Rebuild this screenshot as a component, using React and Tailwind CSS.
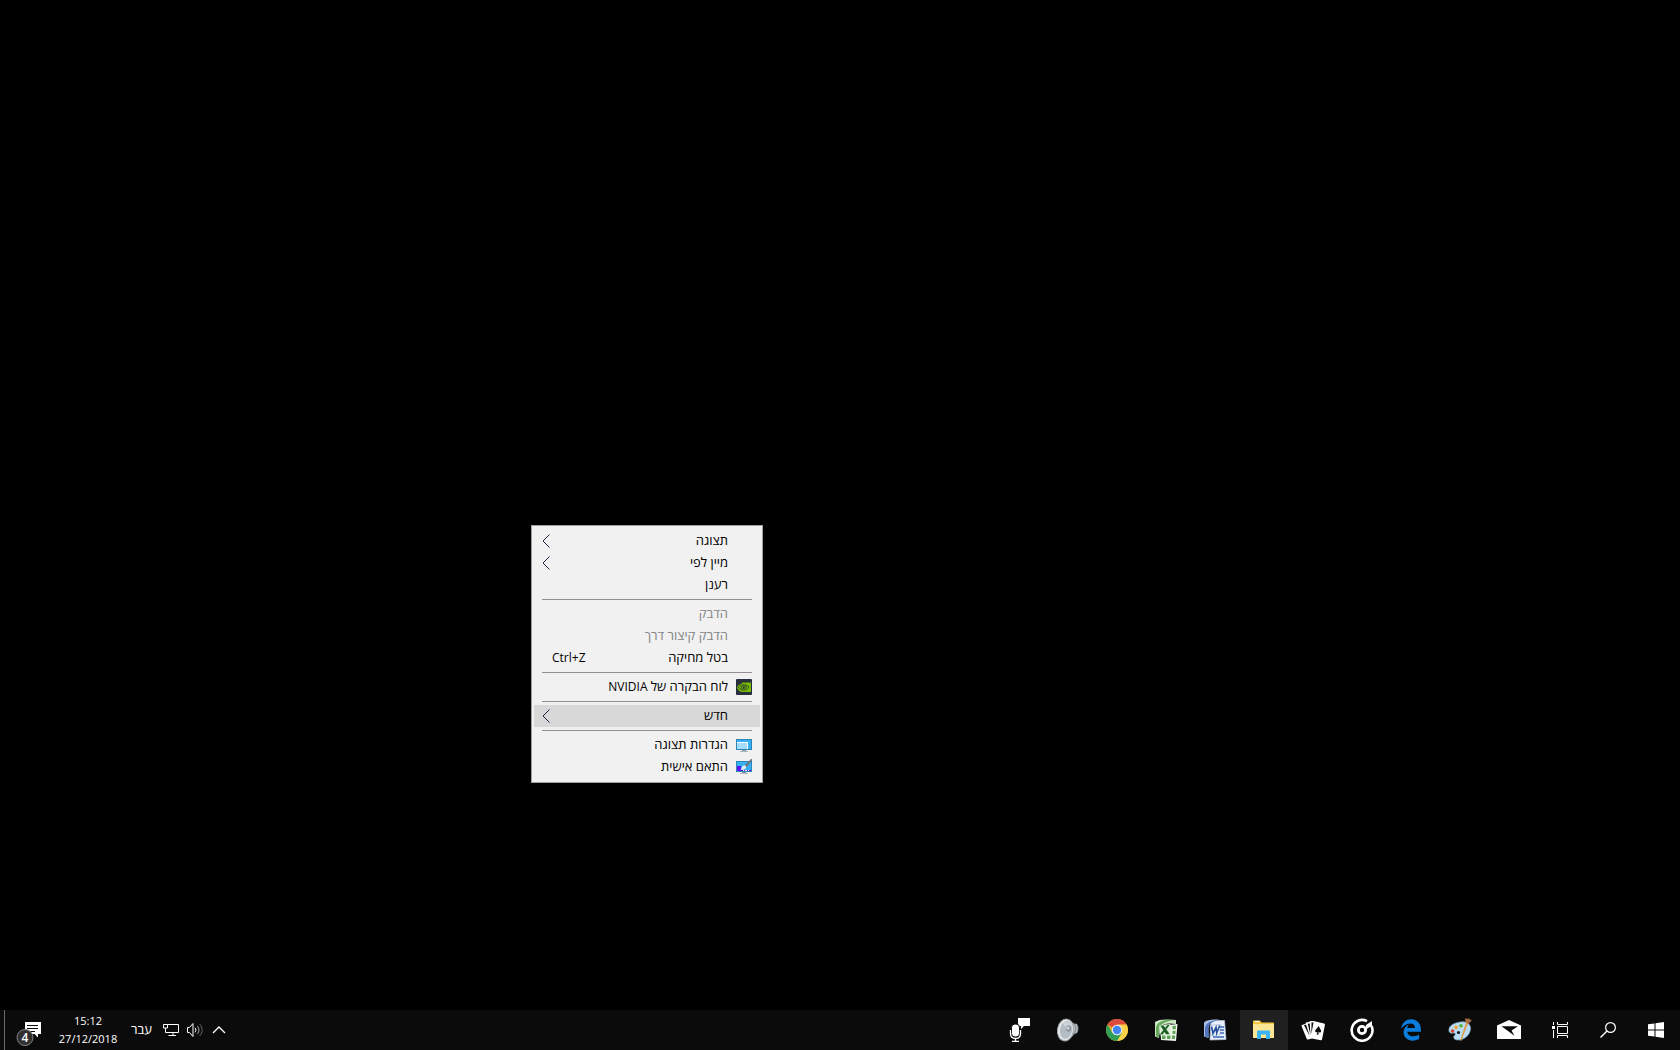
import React from "react";
import { FaEdgeLegacy } from "react-icons/fa6";

function Icon({ children, className = "w-6 h-6", box = "0 0 24 24" }) {
  return (
    <svg viewBox={box} className={`shrink-0 ${className}`} fill="none" aria-hidden="true">
      {children}
    </svg>
  );
}

/* ---------- context menu icons ---------- */

const NvidiaIcon = () => (
  <Icon className="w-4 h-4" box="0 0 16 16">
    <rect width="16" height="16" rx="1" fill="#262f3b" />
    <path d="M6 3.500h9v9.500H6c-2.500-.4-4-2-5-4.600C2.200 6 3.800 4.800 6 4.500Z" fill="#76b900" />
    <path d="M2.500 8.500C4 5.500 9 4.500 13 8c-2.500 4-7.500 3.800-10.500.5Z" stroke="#262f3b" strokeWidth=".8" />
    <path d="M5 8.300C6.500 6.500 9 6.500 10.500 8 9 10 6.500 10 5 8.300Z" stroke="#262f3b" strokeWidth=".8" />
    <rect x="7" y="7.700" width="1.500" height="1.200" fill="#262f3b" />
  </Icon>
);

const DisplayIcon = () => (
  <Icon className="w-4 h-4" box="0 0 16 16">
    <rect x=".5" y="2.500" width="15" height="10" fill="#36b0f5" stroke="#2d86b8" />
    <path d="M1 5.500h10.500V12H1Z" fill="#a6dcfb" />
    <path d="M1 5.500h10.500V12" stroke="#fff" />
    <path d="M6 13h4v1H6Z" fill="#8b98a3" />
    <path d="M4 14h8v1H4Z" fill="#a9b6c0" />
  </Icon>
);

const PersonalizeIcon = () => (
  <Icon className="w-4 h-4" box="0 0 16 16">
    <rect x=".5" y="2.500" width="15" height="10" fill="#36b0f5" stroke="#2d86b8" />
    <path d="M1 7h4v5H1Z" fill="#5a12f5" />
    <path d="M5 11h10v1H5Z" fill="#5a12f5" />
    <path d="M7 11h1v1H7ZM9 11h2v1H9ZM12 11h1v1h-1Z" fill="#fff" />
    <path d="M15 0h1v1.500L10.500 8 8.500 6.500Z" fill="#6c7680" />
    <path d="M8.500 6.200c-2.500.3-2.300 2.800-4 4.300 3 .8 6-.5 5.700-3Z" fill="#e8ecf0" />
    <path d="M6 13h4v1H6Z" fill="#8b98a3" />
    <path d="M4 14h8v1H4Z" fill="#a9b6c0" />
  </Icon>
);

const SubmenuArrow = () => (
  <Icon className="w-2 h-4" box="0 0 8 16">
    <path d="M7.500 1.500 1 8l6.500 6.500" stroke="#23234a" />
  </Icon>
);

/* ---------- taskbar app icons ---------- */

const StartIcon = () => (
  <Icon className="w-4 h-4" box="0 0 16 16">
    <path d="M0 2.300 6.500 1.400V7.500H0ZM7.500 1.200 16 0V7.500H7.500ZM0 8.500H6.500V14.600L0 13.700ZM7.500 8.500H16V16L7.500 14.800Z" fill="#fff" />
  </Icon>
);

const SearchIcon = () => (
  <Icon className="w-4 h-4" box="0 0 16 16">
    <circle cx="10.500" cy="5.500" r="4.900" stroke="#fff" strokeWidth="1.200" />
    <path d="M7 9 .5 15.500" stroke="#fff" strokeWidth="1.400" />
  </Icon>
);

const TaskViewIcon = () => (
  <Icon className="w-4 h-4" box="0 0 16 16">
    <path d="M1.500 0v3M1.500 8v8M5.500 0v2.500h10V0M5.500 16v-2.500h10V16M5.500 4.500h10v7h-10Z" stroke="#fff" />
    <path d="M0 4h3v3H0Z" fill="#fff" />
  </Icon>
);

const MailIcon = () => (
  <Icon>
    <path d="M0 7.500 12 2l12 5.500V21H0Z" fill="#fff" />
    <path d="M4.500 8.300h16.500l-6.500 4.200 3 5.300Z" fill="#0b0b0b" />
  </Icon>
);

const PaintIcon = () => (
  <Icon>
    <path d="M10 4.500c7-2 13 .8 12.500 6.500C22 17 16 22.500 9.500 22 5 21.600 5 18.500 7 17c1-1 0-2.500-2-2-3 .8-4.500-1-4-4 .5-3 4-5.500 9-6.500Z" fill="#b9dcf3" stroke="#79a3c0" strokeWidth=".7" />
    <circle cx="4.500" cy="13" r="1.800" fill="#dd4335" />
    <circle cx="8" cy="9.300" r="1.800" fill="#f0a52c" />
    <circle cx="13" cy="7.700" r="1.800" fill="#54b335" />
    <circle cx="10.500" cy="14.500" r="1.600" fill="#0d1a29" />
    <path d="M20.500 4 13.500 22.500l-1 1 .2-2.500L18.500 3Z" fill="#e09a45" />
    <path d="m17.500 4-.5-4 2.500 1 1.500-1 .5 1.500 2.500.5-3.500 4Z" fill="#a66b42" />
  </Icon>
);

const EdgeIcon = () => <FaEdgeLegacy className="size-[22px] text-[#0a7ddd]" aria-hidden="true" />;

const GrooveIcon = () => (
  <Icon>
    <path d="M17 3.200A10.400 10.400 0 1 0 21.500 8" stroke="#fff" strokeWidth="2.600" />
    <circle cx="12" cy="12" r="3.600" stroke="#fff" strokeWidth="2.800" />
    <path d="M16 12V7l6-4v5l-4 2" fill="#fff" />
  </Icon>
);

const SolitaireIcon = () => (
  <Icon>
    <path d="M1 7 4.500 5.800 5 4.500l3.500-.7L9 3h3.500L23 5.600c.8.200 1 .7.900 1.300L21 21.500c-.2.600-.6.800-1.200.7L11 20.500l-4 1c-.6.100-1-.1-1.200-.6L.5 8c-.1-.5 0-.8.5-1Z" fill="#fff" />
    <path d="M3 7.300 5 6.600 8.700 18ZM6.700 5.800l2-.4.800 11.600ZM10.500 4.500h2L10.400 16Z" fill="#0b0b0b" />
    <path d="m17.700 8-3.400 4.300c-.7 1.500.8 2.600 2.200 1.700l-1 2.600h2.200l-.2-2.500c1.500 1 3.100 0 2.500-1.700Z" fill="#0b0b0b" />
  </Icon>
);

const ExplorerIcon = () => (
  <Icon>
    <path d="M1 3.500c0-.6.4-1 1-1h6l1.500 2H21c.6 0 1 .4 1 1V19c0 .6-.4 1-1 1H2c-.6 0-1-.4-1-1Z" fill="#f6c643" />
    <path d="M1 6h21v13c0 .6-.4 1-1 1H2c-.6 0-1-.4-1-1Z" fill="#ffe697" />
    <path d="M3 3.500h4" stroke="#fff" />
    <path d="M5 21v-7.500c0-.6.400-1 1-1h11c.6 0 1 .4 1 1V21h-4v-4.500H9V21Z" fill="#3bb4f2" />
  </Icon>
);

const WordIcon = () => (
  <Icon>
    <path d="M8 2.500h13.500l1.500 19-16 .5Z" fill="#e9f0fa" stroke="#b6c6e2" strokeWidth=".7" />
    <path d="M17 9h4M17 12h4M17 15h4M10 19h11" stroke="#3b66b5" strokeWidth="1.300" />
    <path d="M1 4.500C4 1.500 11 1 17 2c-5 0-10 2-11 5-1 3.500-1 9-.5 13L1 18.500Z" fill="#a9bee2" />
    <path d="M17 2C10 2 4 4 2 9v9.500l4 1L5.500 10c0-4 5-7.500 11.500-8Z" fill="#5176bb" />
    <path d="m7 7.500 10-1v10L8 17.500Z" fill="#f8fbff" stroke="#7c99ca" strokeWidth=".5" />
    <path d="m8.500 8.500 1.500 7 3-6 .7 5.500 3-7.500" stroke="#24509f" strokeWidth="1.700" />
  </Icon>
);

const ExcelIcon = () => (
  <Icon>
    <path d="m6 8 17.500-2-1.500 17-15-1Z" fill="#eef8ea" />
    <path d="m18.500 8 3.500-.3-.3 3.600h-3.200ZM18.500 12.700h3.100l-.3 3.300h-2.800ZM18 17.500h3.200l-.3 3.500H18ZM13 17.500h3.500V21H13ZM8 17.500h3.500V21H8Z" fill="#62a258" />
    <path d="M1 4C5 1 12 1 22 2v4C14 4.500 8 6 6 9L5 20l-4-1.500Z" fill="#cfe7c8" />
    <path d="M21 2C11 1 4 3 2 9v9.500l3 .8V10c1-4 7-7 16-8Z" fill="#65a95a" />
    <path d="m5.500 7 11-1v11l-11-.5Z" fill="#d8edd1" />
    <path d="m6.300 7.600 3.200-.2 6 8.600-3.500.2ZM13.500 7l2.200-.2L8.500 16.400l-2.500-.2Z" fill="#185c22" />
  </Icon>
);

const ChromeIcon = () => (
  <Icon>
    <circle cx="12" cy="12" r="11" fill="#e5ab21" />
    <path d="M12 12 2.500 6.500A11 11 0 0 1 21.500 6.500Z" fill="#dd4b3e" />
    <path d="M12 6.500h9.500A11 11 0 0 1 12 23l4.800-8.200Z" fill="#fbd04b" />
    <path d="M2.500 6.500A11 11 0 0 0 12 23l4.800-8.200L12 12 7.200 14.800Z" fill="#2f9e57" />
    <circle cx="12" cy="12" r="5.300" fill="#f1f1f1" />
    <circle cx="12" cy="12" r="4.200" fill="#4385f3" />
  </Icon>
);

const SpeakerAppIcon = () => (
  <Icon>
    <path d="m10 1 6 3 2 1.500c3-.5 4.500 1.500 4.500 5 0 3.500-1.500 5.500-4 5.500l-2.500 3-5 3.500Z" fill="#899197" />
    <path d="M17.500 6c1.500 3 1.500 6 0 9M20 6c1 3 1 6 0 9" stroke="#c2c7ca" />
    <ellipse cx="9.500" cy="12" rx="8" ry="11" fill="#e3e6e8" stroke="#9fa6aa" transform="rotate(9 9.500 12)" />
    <ellipse cx="10" cy="12" rx="6" ry="8.800" fill="#b4bdc4" transform="rotate(9 10 12)" />
    <path d="M7 5c4-2 8 1 8.500 4L11 12Z" fill="#cfd5d9" />
    <ellipse cx="12.500" cy="10.500" rx="2.500" ry="3.200" fill="#8a959e" />
    <circle cx="12" cy="10" r="1.600" fill="#d5d9dc" />
  </Icon>
);

const VoiceIcon = () => (
  <Icon>
    <path d="M11 0h12v8h-6l-3 3V8h-3Z" fill="#fff" />
    <rect x="4.500" y="6" width="8" height="13" rx="3.500" fill="#fff" stroke="#0b0b0b" />
    <path d="M3.500 12v3.500c0 3 2 5 5 5s5-2 5-5V12M8.500 20v3M5 23.300h7" stroke="#fff" strokeWidth="1.300" />
  </Icon>
);

/* ---------- tray icons ---------- */

const ChevronUpIcon = () => (
  <Icon className="w-4 h-4" box="0 0 16 16">
    <path d="m2 11 6-6 6 6" stroke="#fff" strokeWidth="1.300" />
  </Icon>
);

const VolumeIcon = () => (
  <Icon className="w-4 h-4" box="0 0 16 16">
    <path d="M.5 5.500h2l3.500-4v13l-3.500-4h-2Z" stroke="#fff" />
    <path d="M8 5.800c1.200 1.500 1.200 3 0 4.500" stroke="#fff" />
    <path d="M10.300 4c2.200 2.500 2.200 5.600 0 8.200" stroke="#aaa" />
    <path d="M12.700 2c3.200 4 3.200 8.200 0 12" stroke="#666" />
  </Icon>
);

const NetworkIcon = () => (
  <Icon className="w-4 h-4" box="0 0 16 16">
    <path d="M4.500 2.500h11v8h-13V6M10 10.500v3M5.500 13.500H13M.5 2.500h4V6h-4Z" stroke="#fff" />
  </Icon>
);

const ActionCenterIcon = () => (
  <svg viewBox="0 0 28 26" className="block w-7 h-[26px]" aria-hidden="true">
    <path d="M10 1h16v12H23v3.500L19.500 13H10Z" fill="#fff" />
    <path d="M12 4.500h11M12 7.500h11M15 10.500h5" stroke="#0b0b0b" />
    <circle cx="10" cy="16.500" r="8" fill="#2f2f2f" stroke="#858585" />
  </svg>
);

const apps = [
  { name: "דואר", icon: MailIcon },
  { name: "צייר", icon: PaintIcon },
  { name: "Microsoft Edge", icon: EdgeIcon },
  { name: "Groove", icon: GrooveIcon },
  { name: "Solitaire", icon: SolitaireIcon },
  { name: "סייר הקבצים", icon: ExplorerIcon, active: true },
  { name: "Word", icon: WordIcon },
  { name: "Excel", icon: ExcelIcon },
  { name: "Chrome", icon: ChromeIcon },
  { name: "שמע", icon: SpeakerAppIcon },
  { name: "מקליט קול", icon: VoiceIcon },
];

const menu = [
  [
    { label: "תצוגה", submenu: true },
    { label: "מיין לפי", submenu: true },
    { label: "רענן" },
  ],
  [
    { label: "הדבק", disabled: true },
    { label: "הדבק קיצור דרך", disabled: true },
    { label: "בטל מחיקה", shortcut: "Ctrl+Z" },
  ],
  [{ label: "לוח הבקרה של", brand: "NVIDIA", icon: NvidiaIcon }],
  [{ label: "חדש", submenu: true, highlighted: true }],
  [
    { label: "הגדרות תצוגה", icon: DisplayIcon },
    { label: "התאם אישית", icon: PersonalizeIcon },
  ],
];

function MenuItem({ label, brand, submenu, disabled, shortcut, icon: Glyph, highlighted }) {
  return (
    <button
      type="button"
      role="menuitem"
      disabled={disabled}
      className={`flex h-[22px] w-full items-center gap-2 px-2 text-[13px] text-black disabled:text-[#858585] ${highlighted ? "bg-[#d8d8d8]" : ""}`}
    >
      <span className="flex w-4 shrink-0">{Glyph && <Glyph />}</span>
      <span className="grow whitespace-nowrap text-start">
        {label}
        {brand && <span className="text-xs"> {brand}</span>}
      </span>
      {shortcut && <span dir="ltr" className="ml-2.5 w-[34px] whitespace-nowrap text-left text-xs">{shortcut}</span>}
      {submenu && <SubmenuArrow />}
    </button>
  );
}

function ContextMenu() {
  return (
    <div role="menu" className="absolute left-[531px] top-[525px] w-58 border border-[#a0a0a0] bg-[#f1f1f1] px-0.5 py-1">
      {menu.map((group, i) => (
        <div key={i}>
          {i > 0 && <hr className="mx-2 my-[3px] border-t border-[#909090]" />}
          {group.map((item) => (
            <MenuItem key={item.label} {...item} />
          ))}
        </div>
      ))}
    </div>
  );
}

function TaskButton({ name, icon: Glyph, active }) {
  return (
    <button
      type="button"
      aria-label={name}
      className={`flex h-full w-12 shrink-0 items-center justify-center ${active ? "bg-[#202020]" : ""}`}
    >
      <Glyph />
    </button>
  );
}

function Taskbar() {
  return (
    <footer className="flex h-10 shrink-0 justify-between bg-[#0b0b0b] text-white">
      <nav className="flex">
        <TaskButton name="התחל" icon={StartIcon} />
        <TaskButton name="חיפוש" icon={SearchIcon} />
        <TaskButton name="תצוגת משימות" icon={TaskViewIcon} />
        <div className="flex gap-px ps-[3px]">
          {apps.map((app) => (
            <TaskButton key={app.name} {...app} />
          ))}
        </div>
      </nav>
      <div className="flex items-center">
        <button type="button" aria-label="הצג סמלים מוסתרים" className="flex h-full w-6 items-center justify-center">
          <ChevronUpIcon />
        </button>
        <button type="button" aria-label="עוצמת קול" className="flex h-full w-6 items-center justify-center">
          <VolumeIcon />
        </button>
        <button type="button" aria-label="רשת" className="flex h-full w-6 items-center justify-center">
          <NetworkIcon />
        </button>
        <button type="button" className="h-full w-[31px] whitespace-nowrap pr-1 text-[13px]">עבר</button>
        <button type="button" dir="ltr" className="flex h-full w-20 flex-col items-center justify-center text-[11px] leading-[18px]">
          <span>15:12</span>
          <span>27/12/2018</span>
        </button>
        <button type="button" aria-label="מרכז הפעולות, 4 הודעות" className="flex h-full w-[43px] items-end justify-start pb-[3px] pr-[5px]">
          <span className="relative block">
            <ActionCenterIcon />
            <span className="absolute bottom-0 left-1 w-3 text-center text-xs font-semibold leading-[18px]">4</span>
          </span>
        </button>
        <button type="button" aria-label="הצג שולחן עבודה" className="h-full w-[5px] border-r border-[#6b6b6b]" />
      </div>
    </footer>
  );
}

export default function App() {
  return (
    <div dir="rtl" lang="he" className="flex h-screen flex-col overflow-hidden bg-black font-['Open_Sans','Noto_Sans','DejaVu_Sans',sans-serif]">
      <main className="relative grow">
        <ContextMenu />
      </main>
      <Taskbar />
    </div>
  );
}
